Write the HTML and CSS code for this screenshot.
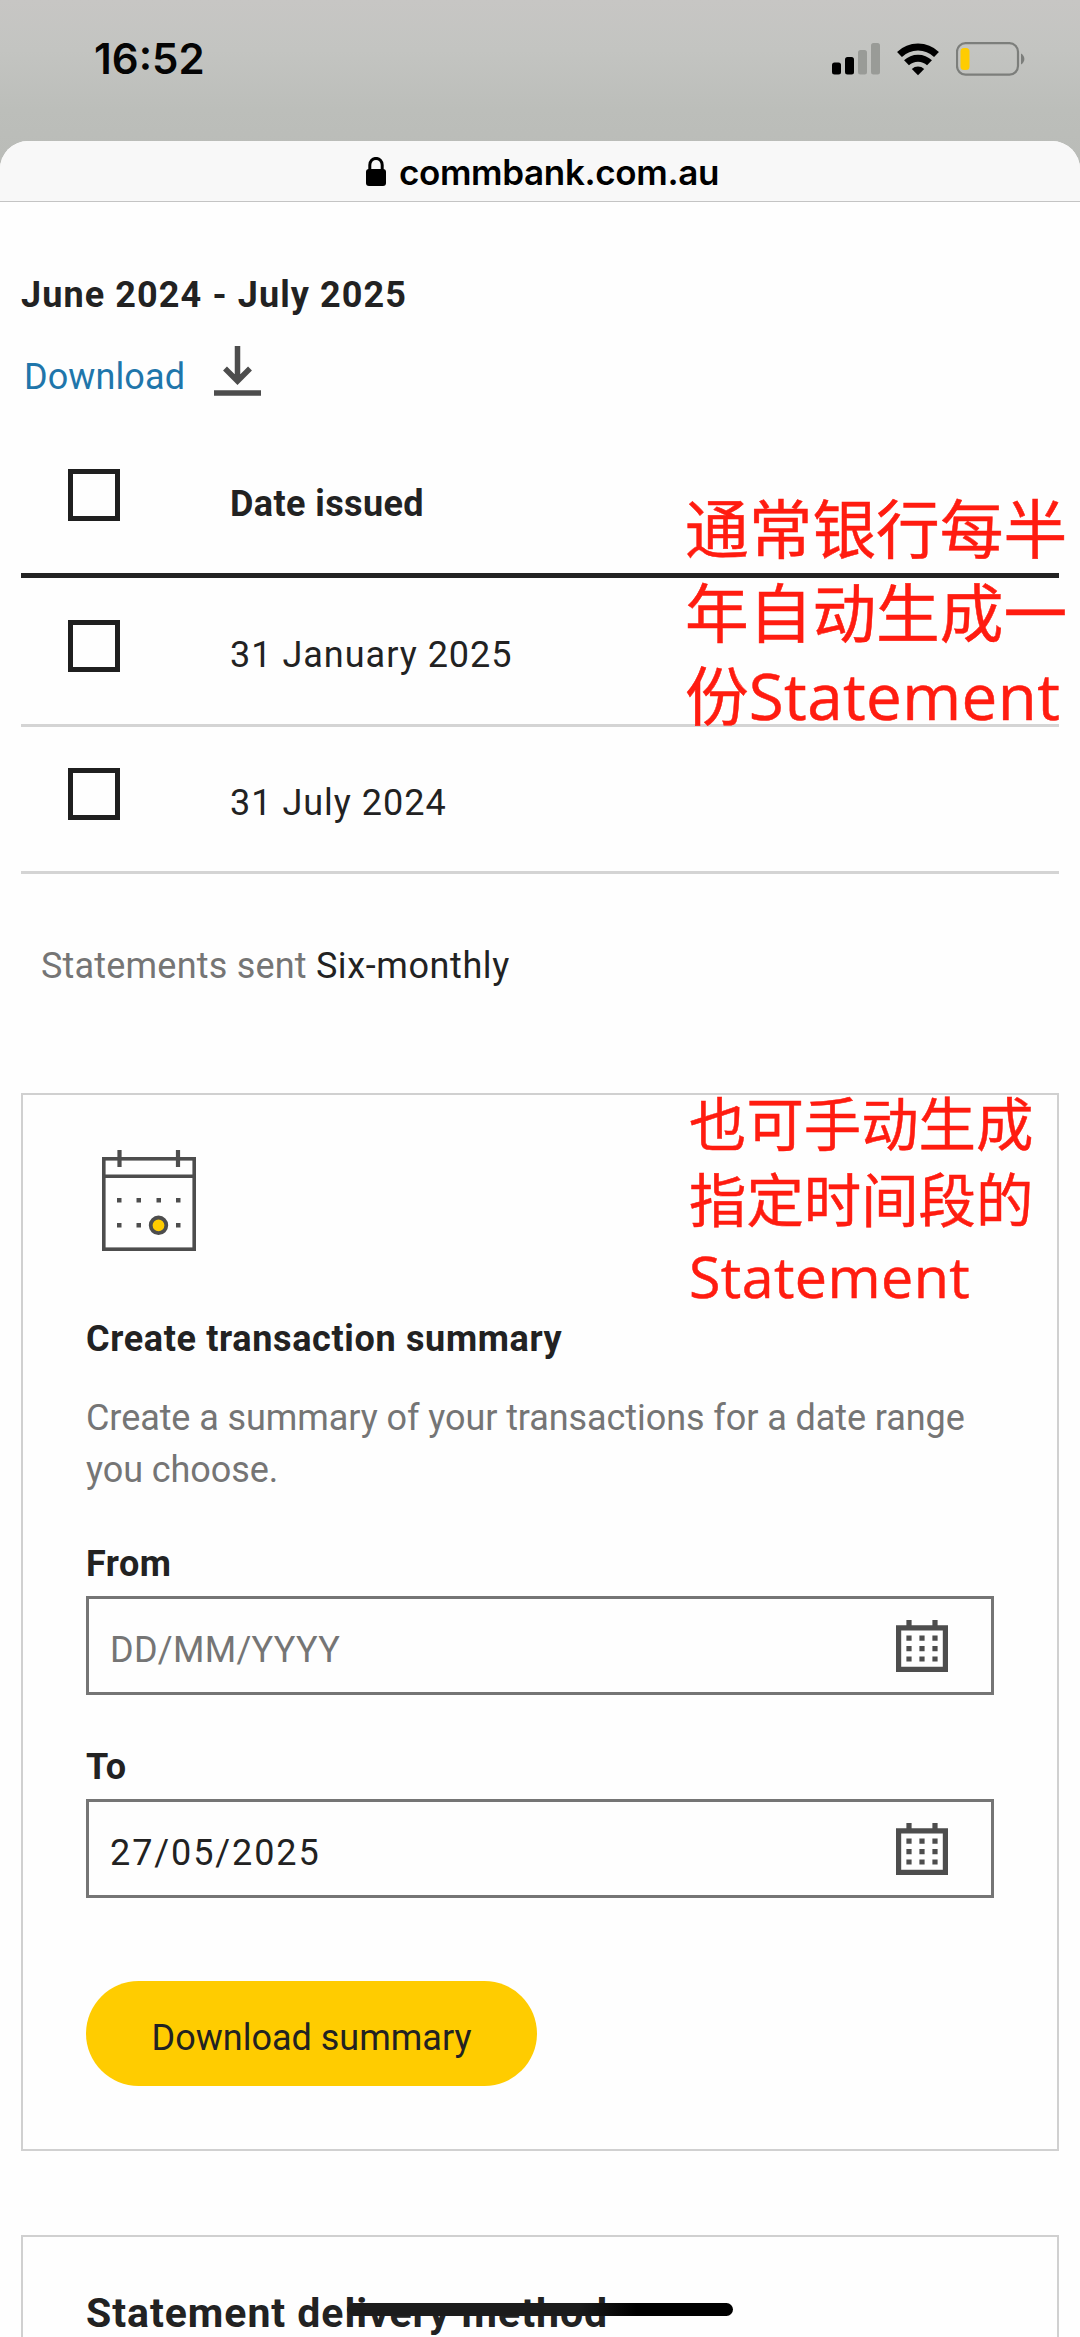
FILE: index.html
```html
<!DOCTYPE html>
<html lang="en">
<head>
<meta charset="UTF-8">
<meta name="viewport" content="width=device-width, initial-scale=1.0">
<title>Statements</title>
<link rel="stylesheet" href="styles.css">
</head>
<body>

<div class="status-bar">
  <span class="time">16:52</span>
  <div class="status-icons">
    <svg class="signal" width="49" height="33" viewBox="0 0 49 33">
      <rect x="0" y="20.5" width="9" height="12" rx="2.5"/>
      <rect x="13" y="15" width="9" height="17.5" rx="2.5"/>
      <rect class="off" x="26" y="8" width="9" height="24.5" rx="2.5"/>
      <rect class="off" x="39" y="1" width="9" height="31.5" rx="2.5"/>
    </svg>
    <svg class="wifi" width="42" height="33" viewBox="0 0 42 33">
      <path class="arc" d="M2.5 11.5 A26.5 26.5 0 0 1 39.5 11.5"/>
      <path class="arc" d="M9.5 19.8 A16.5 16.5 0 0 1 32.5 19.8"/>
      <path d="M14.8 26 A9.2 9.2 0 0 1 27.2 26 L21 32.2 Z"/>
    </svg>
    <svg class="battery" width="70" height="34" viewBox="0 0 70 34">
      <rect class="shell" x="1" y="1.2" width="61" height="31.4" rx="8.5"/>
      <rect class="level" x="4.5" y="6" width="9" height="22" rx="3.5"/>
      <path class="cap" d="M65 11.5 C69.5 14 69.5 20 65 22.5 Z"/>
    </svg>
  </div>
</div>

<div class="sheet">
  <div class="url-bar">
    <svg class="lock" width="20" height="30" viewBox="0 0 20 30">
      <path class="shackle" d="M3.8 13 V8 A6.2 6.6 0 0 1 16.2 8 V13"/>
      <rect x="0" y="12" width="20" height="17" rx="3"/>
    </svg>
    <span>commbank.com.au</span>
  </div>

  <main class="content">
    <h2 class="period">June 2024 - July 2025</h2>

    <div class="download">
      <a href="#">Download</a>
      <svg width="47" height="50" viewBox="0 0 47 50">
        <path d="M23.5 0 V35 M11 22.5 L23.5 35 L36 22.5"/>
        <path d="M0 47 H47"/>
      </svg>
    </div>

    <div class="table">
      <div class="row head"><i class="check"></i><span>Date issued</span></div>
      <div class="row first"><i class="check"></i><span>31 January 2025</span></div>
      <div class="row"><i class="check"></i><span>31 July 2024</span></div>
    </div>

    <p class="sent">Statements sent <span>Six-monthly</span></p>

    <section class="card">
      <svg class="card-icon" width="94" height="101" viewBox="0 0 94 101">
        <rect class="line" x="1.8" y="8.8" width="90.4" height="90.4"/>
        <path class="line" d="M0 26.3 H94"/>
        <path class="pin" d="M17.5 0 V17 M76 0 V17"/>
        <g>
          <rect x="15" y="48" width="4.5" height="4.5"/>
          <rect x="34.5" y="48" width="4.5" height="4.5"/>
          <rect x="54.5" y="48" width="4.5" height="4.5"/>
          <rect x="74" y="48" width="4.5" height="4.5"/>
          <rect x="15" y="73" width="4.5" height="4.5"/>
          <rect x="34.5" y="73" width="4.5" height="4.5"/>
          <rect x="74" y="73" width="4.5" height="4.5"/>
        </g>
        <circle class="day" cx="56.5" cy="75.3" r="7.8"/>
      </svg>

      <h3>Create transaction summary</h3>
      <p class="intro">Create a summary of your transactions for a date range you choose.</p>

      <label for="from">From</label>
      <div class="field">
        <input id="from" type="text" placeholder="DD/MM/YYYY">
        <svg class="calendar" width="52" height="52" viewBox="0 0 20 20">
          <path d="M4 0h2v2h8V0h2v2h4v18H0V2h4zM2 4v14h16V4z" fill-rule="evenodd"/>
          <path d="M4 6h2v2H4zM9 6h2v2H9zM14 6h2v2h-2zM4 10h2v2H4zM9 10h2v2H9zM14 10h2v2h-2zM4 14h2v2H4zM9 14h2v2H9zM14 14h2v2h-2z"/>
        </svg>
      </div>

      <label for="to" class="to">To</label>
      <div class="field">
        <input id="to" type="text" value="27/05/2025">
        <svg class="calendar" width="52" height="52" viewBox="0 0 20 20">
          <path d="M4 0h2v2h8V0h2v2h4v18H0V2h4zM2 4v14h16V4z" fill-rule="evenodd"/>
          <path d="M4 6h2v2H4zM9 6h2v2H9zM14 6h2v2h-2zM4 10h2v2H4zM9 10h2v2H9zM14 10h2v2h-2zM4 14h2v2H4zM9 14h2v2H9zM14 14h2v2h-2z"/>
        </svg>
      </div>

      <button class="btn">Download summary</button>
    </section>

    <section class="card delivery">
      <h2>Statement delivery method</h2>
    </section>
  </main>
</div>

<!-- Notes on top of the page -->
<p class="note note-auto" lang="zh-CN">通常银行每半<br>年自动生成一<br>份<span>Statement</span></p>
<p class="note note-manual" lang="zh-CN">也可手动生成<br>指定时间段的<br><span>Statement</span></p>

<div class="home-bar"></div>

</body>
</html>
```
FILE: styles.css
```css
* {
  box-sizing: border-box;
}

body {
  position: relative;
  margin: 0;
  width: 1080px;
  height: 2337px;
  overflow: hidden;
  background: linear-gradient(180deg, #c7c6c4 0, #c3c4c1 50px, #bcbeba 110px, #b9bbb7 180px);
  color: #222;
  font-family: Roboto, "Liberation Sans", sans-serif;
  font-size: 36px;
  line-height: 52px;
}

h2, h3, p {
  margin: 0;
}

svg {
  display: block;
}

/* Status bar */
.status-bar {
  display: flex;
  justify-content: space-between;
  height: 141px;
  padding: 33px 54px 0 94px;
}

.time {
  font-family: Inter, sans-serif;
  font-size: 42px;
  font-weight: 600;
  line-height: 52px;
  color: #050505;
}

.status-icons {
  display: flex;
  padding-top: 9px;
}

.signal .off {
  fill: #999b97;
}

.wifi {
  margin: 1px 17px 0 16px;
}

.wifi .arc {
  fill: none;
  stroke: #000;
  stroke-width: 7;
}

.battery .shell {
  fill: none;
  stroke: #7c7e7b;
  stroke-width: 2.2;
}

.battery .level {
  fill: #fc0;
}

.battery .cap {
  fill: #7c7e7b;
}

/* Browser sheet */
.sheet {
  height: 2196px;
  overflow: hidden;
  border-radius: 28px 28px 0 0;
  background: #fefefe;
}

.url-bar {
  display: flex;
  justify-content: center;
  align-items: center;
  gap: 13px;
  height: 61px;
  padding-top: 2px;
  padding-left: 5px;
  border-bottom: 1px solid #c4c4c4;
  background: #f8f8f8;
  color: #000;
  font-family: Inter, sans-serif;
  font-size: 35px;
  font-weight: 600;
  letter-spacing: -0.35px;
}

.lock .shackle {
  fill: none;
  stroke: #000;
  stroke-width: 3;
}

.content {
  padding: 67px 21px 0;
}

.period {
  letter-spacing: 1.1px;
  font-size: 36px;
}

.download {
  display: flex;
  gap: 29px;
  height: 56px;
  margin-top: 25px;
  padding-left: 3px;
}

.download a {
  padding-top: 5px;
  color: #1f76ab;
  text-decoration: none;
  letter-spacing: 0.1px;
}

.download svg {
  fill: none;
  stroke: #4d4d4d;
  stroke-width: 5.5;
}

/* Statement list */
.row {
  display: flex;
  gap: 110px;
  height: 147px;
  padding: 41px 0 0 47px;
  border-bottom: 3px solid #d4d4d4;
  letter-spacing: 1px;
}

.row.head {
  height: 176px;
  padding-top: 67px;
  border-bottom: 5px solid #222;
  font-weight: 700;
  letter-spacing: 0.4px;
}

.row.first {
  height: 149px;
  padding-top: 42px;
}

.row span {
  padding-top: 9px;
}

.check {
  width: 52px;
  height: 52px;
  border: 5px solid #1f1f1f;
}

.sent {
  margin: 66px 0 101px 20px;
  color: #757575;
  letter-spacing: 0.2px;
}

.sent span {
  color: #222;
  letter-spacing: 0.6px;
}

/* Cards */
.card {
  height: 1058px;
  padding: 55px 63px 0;
  border: 2px solid #d0d0d0;
}

.card-icon {
  margin-left: 16px;
  fill: #4d4d4d;
}

.card-icon .line {
  fill: none;
  stroke: #4d4d4d;
  stroke-width: 3.6;
}

.card-icon .pin {
  stroke: #4d4d4d;
  stroke-width: 4.2;
}

.card-icon .day {
  fill: #fc0;
  stroke: #4d4d4d;
  stroke-width: 3.8;
}

.card h3 {
  margin-top: 62px;
  font-size: 36px;
  letter-spacing: 0.65px;
}

.intro {
  margin: 27px 0 42px;
  color: #757575;
  letter-spacing: -0.08px;
}

label {
  display: block;
  font-weight: 700;
  letter-spacing: 0.5px;
}

label.to {
  margin-top: 46px;
}

.field {
  display: flex;
  justify-content: space-between;
  height: 99px;
  margin-top: 6px;
  padding: 0 43px 0 21px;
  border: 3px solid #757575;
}

.field input {
  width: 400px;
  padding: 8px 0 0;
  border: 0;
  outline: 0;
  background: none;
  color: #222;
  font: inherit;
  letter-spacing: 1.9px;
}

.field input::placeholder {
  color: #757575;
  letter-spacing: 0.3px;
}

.calendar {
  margin-top: 21px;
  fill: #4d4d4d;
}

.btn {
  display: block;
  width: 451px;
  height: 105px;
  margin-top: 83px;
  padding: 8px 0 0;
  border: 0;
  border-radius: 53px;
  background: #fc0;
  color: #222;
  font: inherit;
}

.delivery {
  height: 300px;
  margin-top: 84px;
  padding: 50px 62px 0 63px;
}

.delivery h2 {
  font-size: 41px;
  letter-spacing: 0.95px;
}

/* Notes */
.note {
  position: absolute;
  color: #ff1c10;
  font-family: "Open Sans", "Noto Sans CJK SC", sans-serif;
  white-space: nowrap;
  -webkit-text-stroke: 0.5px #ff1c10;
}

.note span {
  letter-spacing: 0.4px;
}

.note-auto {
  top: 487px;
  left: 685px;
  font-size: 63.7px;
  line-height: 83.5px;
}

.note-manual {
  top: 1086px;
  left: 689px;
  font-size: 57.4px;
  line-height: 76px;
}

.home-bar {
  position: absolute;
  left: 347px;
  top: 2303px;
  width: 386px;
  height: 13px;
  border-radius: 7px;
  background: linear-gradient(90deg, #1c1c1c 60%, #000 75%);
}
```
